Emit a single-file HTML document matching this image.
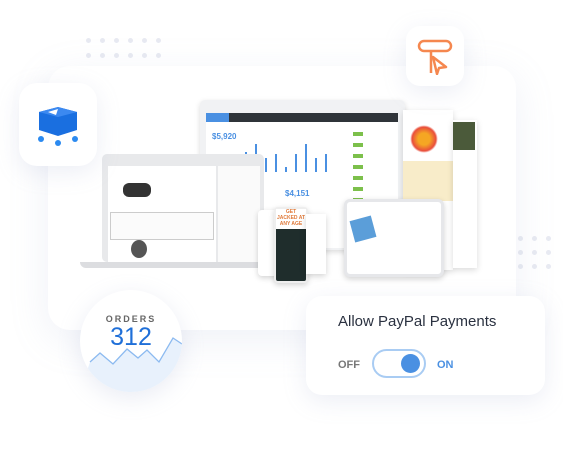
<!DOCTYPE html>
<html><head><meta charset="utf-8"><style>
*{margin:0;padding:0;box-sizing:border-box}
body{width:563px;height:463px;background:#fff;position:relative;overflow:hidden;font-family:"Liberation Sans",sans-serif}
.abs{position:absolute}
.card{position:absolute;background:#fff;box-shadow:0 6px 24px rgba(150,160,200,.18)}
.dot{position:absolute;width:5px;height:5px;border-radius:50%;background:#e8eaf2}
.bar{position:absolute;bottom:0;width:2px;background:#4a90e2}
</style></head><body>
<div class="abs" style="left:86px;top:38px">
<div class="dot" style="left:0;top:0"></div><div class="dot" style="left:14px;top:0"></div><div class="dot" style="left:28px;top:0"></div><div class="dot" style="left:42px;top:0"></div><div class="dot" style="left:56px;top:0"></div><div class="dot" style="left:70px;top:0"></div>
<div class="dot" style="left:0;top:15px"></div><div class="dot" style="left:14px;top:15px"></div><div class="dot" style="left:28px;top:15px"></div><div class="dot" style="left:42px;top:15px"></div><div class="dot" style="left:56px;top:15px"></div><div class="dot" style="left:70px;top:15px"></div>
</div>
<div class="abs" style="left:518px;top:236px">
<div class="dot" style="left:0;top:0"></div><div class="dot" style="left:14px;top:0"></div><div class="dot" style="left:28px;top:0"></div>
<div class="dot" style="left:0;top:14px"></div><div class="dot" style="left:14px;top:14px"></div><div class="dot" style="left:28px;top:14px"></div>
<div class="dot" style="left:0;top:28px"></div><div class="dot" style="left:14px;top:28px"></div><div class="dot" style="left:28px;top:28px"></div>
</div>
<div class="card" style="left:48px;top:66px;width:468px;height:264px;border-radius:22px;box-shadow:0 10px 40px rgba(150,160,200,.15)"></div>
<div class="abs" style="left:200px;top:100px;width:205px;height:150px;background:#f1f2f4;border-radius:5px;box-shadow:0 2px 6px rgba(0,0,0,.15)"></div>
<div class="abs" style="left:206px;top:113px;width:192px;height:9px;background:#2f3439"></div>
<div class="abs" style="left:206px;top:113px;width:23px;height:9px;background:#4a90e2"></div>
<div class="abs" style="left:206px;top:122px;width:192px;height:126px;background:#fff"></div>
<div class="abs" style="left:212px;top:132px;color:#4a90e2;font-size:8px;font-weight:bold">$5,920</div>
<div class="abs" style="left:230px;top:140px;width:110px;height:32px">
<div class="bar" style="left:15px;height:20px"></div><div class="bar" style="left:25px;height:28px"></div><div class="bar" style="left:35px;height:14px"></div><div class="bar" style="left:45px;height:18px"></div><div class="bar" style="left:55px;height:5px"></div><div class="bar" style="left:65px;height:18px"></div><div class="bar" style="left:75px;height:28px"></div><div class="bar" style="left:85px;height:14px"></div><div class="bar" style="left:95px;height:18px"></div>
</div>
<div class="abs" style="left:353px;top:128px;width:40px;height:110px;background:repeating-linear-gradient(#fff 0 4px,#7cc04b 4px 8px,#fff 8px 11px);background-size:10px 11px;background-repeat:repeat-y"></div>
<div class="abs" style="left:285px;top:189px;color:#4a90e2;font-size:8px;font-weight:bold">$4,151</div>
<div class="abs" style="left:403px;top:110px;width:50px;height:160px;background:#fff;box-shadow:0 2px 6px rgba(0,0,0,.15)"></div>
<div class="abs" style="left:403px;top:161px;width:50px;height:40px;background:#f8ecc9"></div>
<div class="abs" style="left:410px;top:125px;width:28px;height:28px;border-radius:50%;background:radial-gradient(#f5a623 30%,#e94e3c 60%,#fff 70%)"></div>
<div class="abs" style="left:453px;top:120px;width:24px;height:148px;background:#fff;box-shadow:0 2px 6px rgba(0,0,0,.15)"></div>
<div class="abs" style="left:453px;top:122px;width:22px;height:28px;background:#4b5a3a"></div>
<div class="abs" style="left:102px;top:154px;width:162px;height:108px;background:#e8e9eb;border-radius:5px"></div>
<div class="abs" style="left:108px;top:166px;width:108px;height:96px;background:#fff"></div>
<div class="abs" style="left:218px;top:166px;width:42px;height:96px;background:#fafafa"></div>
<div class="abs" style="left:123px;top:183px;width:28px;height:14px;border-radius:6px;background:#333"></div>
<div class="abs" style="left:110px;top:212px;width:104px;height:28px;border:1px solid #ccc;background:#fbfbfb"></div>
<div class="abs" style="left:80px;top:262px;width:196px;height:6px;background:#dcdde0;border-radius:0 0 6px 6px"></div>
<div class="abs" style="left:131px;top:240px;width:16px;height:18px;border-radius:50%;background:#555"></div>
<div class="abs" style="left:258px;top:210px;width:24px;height:66px;background:#fff;border-radius:4px;box-shadow:0 2px 6px rgba(0,0,0,.18)"></div>
<div class="abs" style="left:274px;top:207px;width:34px;height:76px;background:#1f2d2c;border-radius:4px;border:2px solid #eee;box-shadow:0 2px 6px rgba(0,0,0,.18)"></div>
<div class="abs" style="left:276px;top:209px;width:30px;height:20px;background:#fff;color:#e07a3a;font-size:5px;font-weight:bold;text-align:center">GET JACKED AT ANY AGE</div>
<div class="abs" style="left:306px;top:214px;width:20px;height:60px;background:#fff;box-shadow:0 2px 6px rgba(0,0,0,.18)"></div>
<div class="abs" style="left:344px;top:199px;width:100px;height:78px;background:#fff;border-radius:6px;border:3px solid #e6e7ea;box-shadow:0 2px 6px rgba(0,0,0,.18)"></div>
<div class="abs" style="left:352px;top:218px;width:22px;height:22px;background:#5b9ed9;transform:rotate(-15deg)"></div>
<div class="card" style="left:19px;top:83px;width:78px;height:83px;border-radius:18px"></div>
<svg class="abs" style="left:36px;top:106px" width="44" height="42" viewBox="0 0 44 42">
<path d="M3 6 L22 1 L41 6 L41 24 L22 30 L3 24 Z" fill="#1a6fe0"/>
<path d="M3 6 L22 1 L41 6 L22 11 Z" fill="#3c89f0"/>
<path d="M12 6 L22 3 L20 9 Z" fill="#fff"/>
<circle cx="5" cy="33" r="3" fill="#2b8af0"/><circle cx="22" cy="37" r="3" fill="#2b8af0"/><circle cx="39" cy="33" r="3" fill="#2b8af0"/>
</svg>
<div class="card" style="left:406px;top:26px;width:58px;height:60px;border-radius:14px"></div>
<svg class="abs" style="left:416px;top:37px" width="38" height="38" viewBox="0 0 38 38">
<path d="M8 14 H30 A5 5 0 0 0 30 4 H8 A5 5 0 0 0 8 14 Z" fill="none" stroke="#f5874f" stroke-width="2.5"/>
<path d="M15 14 V36 M17 20 L30 30 L23 31 L21 37 Z" fill="none" stroke="#f5874f" stroke-width="2.5" stroke-linejoin="round"/>
</svg>
<div class="abs" style="left:80px;top:290px;width:102px;height:102px;border-radius:50%;background:#fff;box-shadow:0 6px 24px rgba(150,160,200,.2);overflow:hidden">
<svg class="abs" style="left:0;top:0" width="102" height="102" viewBox="0 0 102 102">
<path d="M10 72 L20 63 L33 74 L47 59 L58 68 L67 60 L79 72 L93 48 L102 54 L102 102 L0 102 Z" fill="#e8f1fc"/>
<path d="M10 72 L20 63 L33 74 L47 59 L58 68 L67 60 L79 72 L93 48 L102 54" fill="none" stroke="#8cbaf0" stroke-width="1.3"/>
</svg>
<div class="abs" style="left:0;width:102px;top:24px;text-align:center;font-size:9px;letter-spacing:2px;color:#666;font-weight:bold">ORDERS</div>
<div class="abs" style="left:0;width:102px;top:33px;text-align:center;font-size:25px;color:#1f6fd8">312</div>
</div>
<div class="card" style="left:306px;top:296px;width:239px;height:99px;border-radius:16px">
<div class="abs" style="left:32px;top:17px;font-size:15px;color:#2a3140">Allow PayPal Payments</div>
<div class="abs" style="left:32px;top:63px;font-size:11px;color:#777;font-weight:bold">OFF</div>
<div class="abs" style="left:66px;top:53px;width:54px;height:29px;border-radius:15px;border:2px solid #a9ccf3;background:#fff"></div>
<div class="abs" style="left:95px;top:58px;width:19px;height:19px;border-radius:50%;background:#4a90e2"></div>
<div class="abs" style="left:131px;top:63px;font-size:11px;color:#4a90e2;font-weight:bold">ON</div>
</div>
</body></html>
